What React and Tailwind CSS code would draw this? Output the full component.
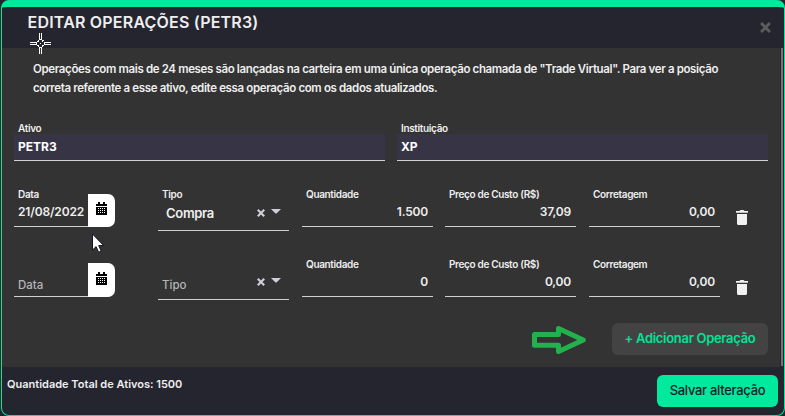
const operations = [
  { id: 1, date: "21/08/2022", type: "Compra", quantity: "1.500", price: "37,09", fee: "0,00" },
  { id: 2, date: "", type: "", quantity: "0", price: "0,00", fee: "0,00" },
];

function CalendarIcon() {
  return (
    <svg width="11" height="13" viewBox="0 0 11 13" fill="#000" shapeRendering="crispEdges">
      <path d="M2 0h2v2h3V0h2v2h2v2H0V2h2z" />
      <path fillRule="evenodd" d="M0 5h11v8H0zM2 6v1h1V6zM4 6v1h1V6zM6 6v1h1V6zM8 6v1h1V6zM2 8v1h1V8zM4 8v1h1V8zM6 8v1h1V8zM8 8v1h1V8zM2 10v1h1v-1zM4 10v1h1v-1zM6 10v1h1v-1zM8 10v1h1v-1z" />
    </svg>
  );
}

function TrashIcon() {
  return (
    <svg width="12" height="15" viewBox="0 0 12 15" fill="#f1f1f1">
      <path d="M0 1h3.5L4.5 0h3l1 1H12v1.7H0zM1 4h10v9.4A1.6 1.6 0 0 1 9.4 15H2.6A1.6 1.6 0 0 1 1 13.4z" />
    </svg>
  );
}

function CrossIcon({ size, width }) {
  return (
    <svg width={size} height={size} viewBox="0 0 10 10" stroke="currentColor" strokeWidth={width} fill="none">
      <path d="M1 1l8 8M9 1l-8 8" />
    </svg>
  );
}

function Label({ children }) {
  return (
    <span className="block h-3 pl-1 text-[10px] leading-[10px] font-semibold tracking-[-0.34px] whitespace-nowrap">
      {children}
    </span>
  );
}

function AssetField({ label, value }) {
  return (
    <div className="w-[371px]">
      <div className="h-3 pt-px">
        <Label>{label}</Label>
      </div>
      <div className="h-[27px] border-b border-[#d0d0d0] bg-[#373545] pl-1 text-xs leading-[25px] font-bold text-white">
        {value}
      </div>
    </div>
  );
}

function NumberField({ label, value }) {
  return (
    <div className="h-[38px] w-[131px] border-b border-[#d0d0d0]">
      <Label>{label}</Label>
      <div className="pr-[5px] text-right text-xs leading-[22px] font-semibold tracking-[-0.2px]">{value}</div>
    </div>
  );
}

function DateField({ value }) {
  return (
    <div className="flex h-[38px] w-[101px]">
      <div className="w-[74px] border-b border-[#d0d0d0]">
        {value ? (
          <>
            <Label>Data</Label>
            <div className="pl-1 text-xs leading-[22px] font-semibold tracking-[-0.15px]">{value}</div>
          </>
        ) : (
          <div className="pt-[15px] pl-1 text-[11.5px] leading-[23px] font-medium text-[#b5b5b5]">Data</div>
        )}
      </div>
      <button
        className={`flex w-[27px] justify-center rounded-r-[7px] bg-white ${value ? "mt-[5px] h-[33px] pt-2" : "mt-1 h-[34px] pt-[9px]"}`}
      >
        <CalendarIcon />
      </button>
    </div>
  );
}

function TypeField({ value }) {
  return (
    <div className={`ml-[43px] flex w-[131px] justify-between border-b border-[#d0d0d0] ${value ? "h-[42px]" : "h-[41px]"}`}>
      {value ? (
        <div>
          <Label>Tipo</Label>
          <div className="pl-2 text-[13px] leading-[25px] font-semibold tracking-[-0.3px]">{value}</div>
        </div>
      ) : (
        <div className="pt-[15px] pl-1 text-[11.5px] leading-[23px] font-medium text-[#b5b5b5]">Tipo</div>
      )}
      <div className={`flex items-start gap-[6px] pr-2 text-[#cfcfdb] ${value ? "pt-5" : "pt-[19px]"}`}>
        <CrossIcon size={8} width={2.7} />
        <svg width="10" height="5" viewBox="0 0 10 5" fill="currentColor">
          <path d="M0 0h10L6 4Q5 5 4 4z" />
        </svg>
      </div>
    </div>
  );
}

function OperationRow({ operation }) {
  return (
    <div className="flex h-[70px] items-start">
      <DateField value={operation.date} />
      <TypeField value={operation.type} />
      <div className="ml-[13px] flex">
        <NumberField label="Quantidade" value={operation.quantity} />
        <div className="ml-3">
          <NumberField label="Preço de Custo (R$)" value={operation.price} />
        </div>
        <div className="ml-[13px]">
          <NumberField label="Corretagem" value={operation.fee} />
        </div>
      </div>
      <button className="mt-[21px] ml-4">
        <TrashIcon />
      </button>
    </div>
  );
}

export default function App() {
  return (
    <div className="relative h-[416px] w-[785px] overflow-hidden bg-[#23232d] pl-px font-['Inter',sans-serif] text-[#eeeeee]">
      <div className="flex h-[416px] w-[784px] flex-col overflow-hidden rounded-[8px] border border-t-[7px] border-[#00e99d] bg-[#252530]">
        <header className="flex h-[41px] shrink-0 justify-between pr-[13px] pl-[25.5px]">
          <h1 className="pt-[3px] text-base leading-6 font-semibold tracking-[0.2px]">EDITAR OPERAÇÕES (PETR3)</h1>
          <button className="self-start pt-[15px] text-[#5c5c5c]">
            <CrossIcon size={11} width={2.6} />
          </button>
        </header>

        <div className="flex h-[319px] shrink-0">
          <main className="w-[778px] bg-[#333333] pl-3">
            <p className="h-[74px] pt-3 pl-[19px] text-[11.5px] leading-[19px] font-semibold tracking-[-0.36px] whitespace-nowrap">
              Operações com mais de 24 meses são lançadas na carteira em uma única operação chamada de "Trade Virtual". Para ver a posição
              <br />
              correta referente a esse ativo, edite essa operação com os dados atualizados.
            </p>
            <div className="flex h-[67px] gap-3">
              <AssetField label="Ativo" value="PETR3" />
              <AssetField label="Instituição" value="XP" />
            </div>
            {operations.map((operation) => (
              <OperationRow key={operation.id} operation={operation} />
            ))}
            <div className="-mt-[6px] flex items-start justify-end pr-3">
              <svg className="mt-[3px] mr-[26px]" width="54" height="28" viewBox="0 0 54 28" fill="none" stroke="#22b14c" strokeWidth="5" strokeLinejoin="round">
                <path d="M2.5 8.5H26.5V2.6L51.3 14 26.5 25.4V19.2H2.5z" />
              </svg>
              <button className="h-8 w-[156px] rounded-[6px] bg-[#434343] text-[13px] font-semibold tracking-[-0.3px] whitespace-nowrap text-[#00e396]">
                + Adicionar Operação
              </button>
            </div>
          </main>
          <div className="ml-[1px] h-[318px] w-[2px] bg-[#747474]" />
        </div>

        <footer className="flex h-12 justify-between pr-[6px] pl-[5px]">
          <span className="pt-2 text-[11px] leading-[18px] font-semibold">Quantidade Total de Ativos: 1500</span>
          <button className="mt-2 h-8 w-[121px] rounded-[6px] bg-[#00e99d] text-[13px] font-medium tracking-[-0.3px] whitespace-nowrap text-[#10202a]">
            Salvar alteração
          </button>
        </footer>
      </div>

      {/* pointers */}
      <svg className="absolute top-[33px] left-[30px]" width="21" height="21" viewBox="0 0 21 21" fill="none" stroke="#fff" shapeRendering="crispEdges">
        <path d="M9.500 0v6M11.500 0v6M9.500 15v6M11.500 15v6M0 9.500h6M0 11.500h6M15 9.500h6M15 11.500h6M9 6.500h3M9 14.500h3M6.500 9v3M14.500 9v3M7 8.500h2M8.500 7v2M12 7.500h2M12.500 7v2M7 12.500h2M8.500 12v2M12 12.500h2M12.500 12v2M10 10.500h1" />
      </svg>
      <svg className="absolute top-[233px] left-[91px]" width="14" height="21" viewBox="0 0 14 21">
        <path d="M1.500 1v16l3.600-3.400 2.500 5.600 2.600-1.100-2.500-5.500h4.900z" fill="#fff" stroke="#161622" strokeWidth="1" />
      </svg>
    </div>
  );
}
